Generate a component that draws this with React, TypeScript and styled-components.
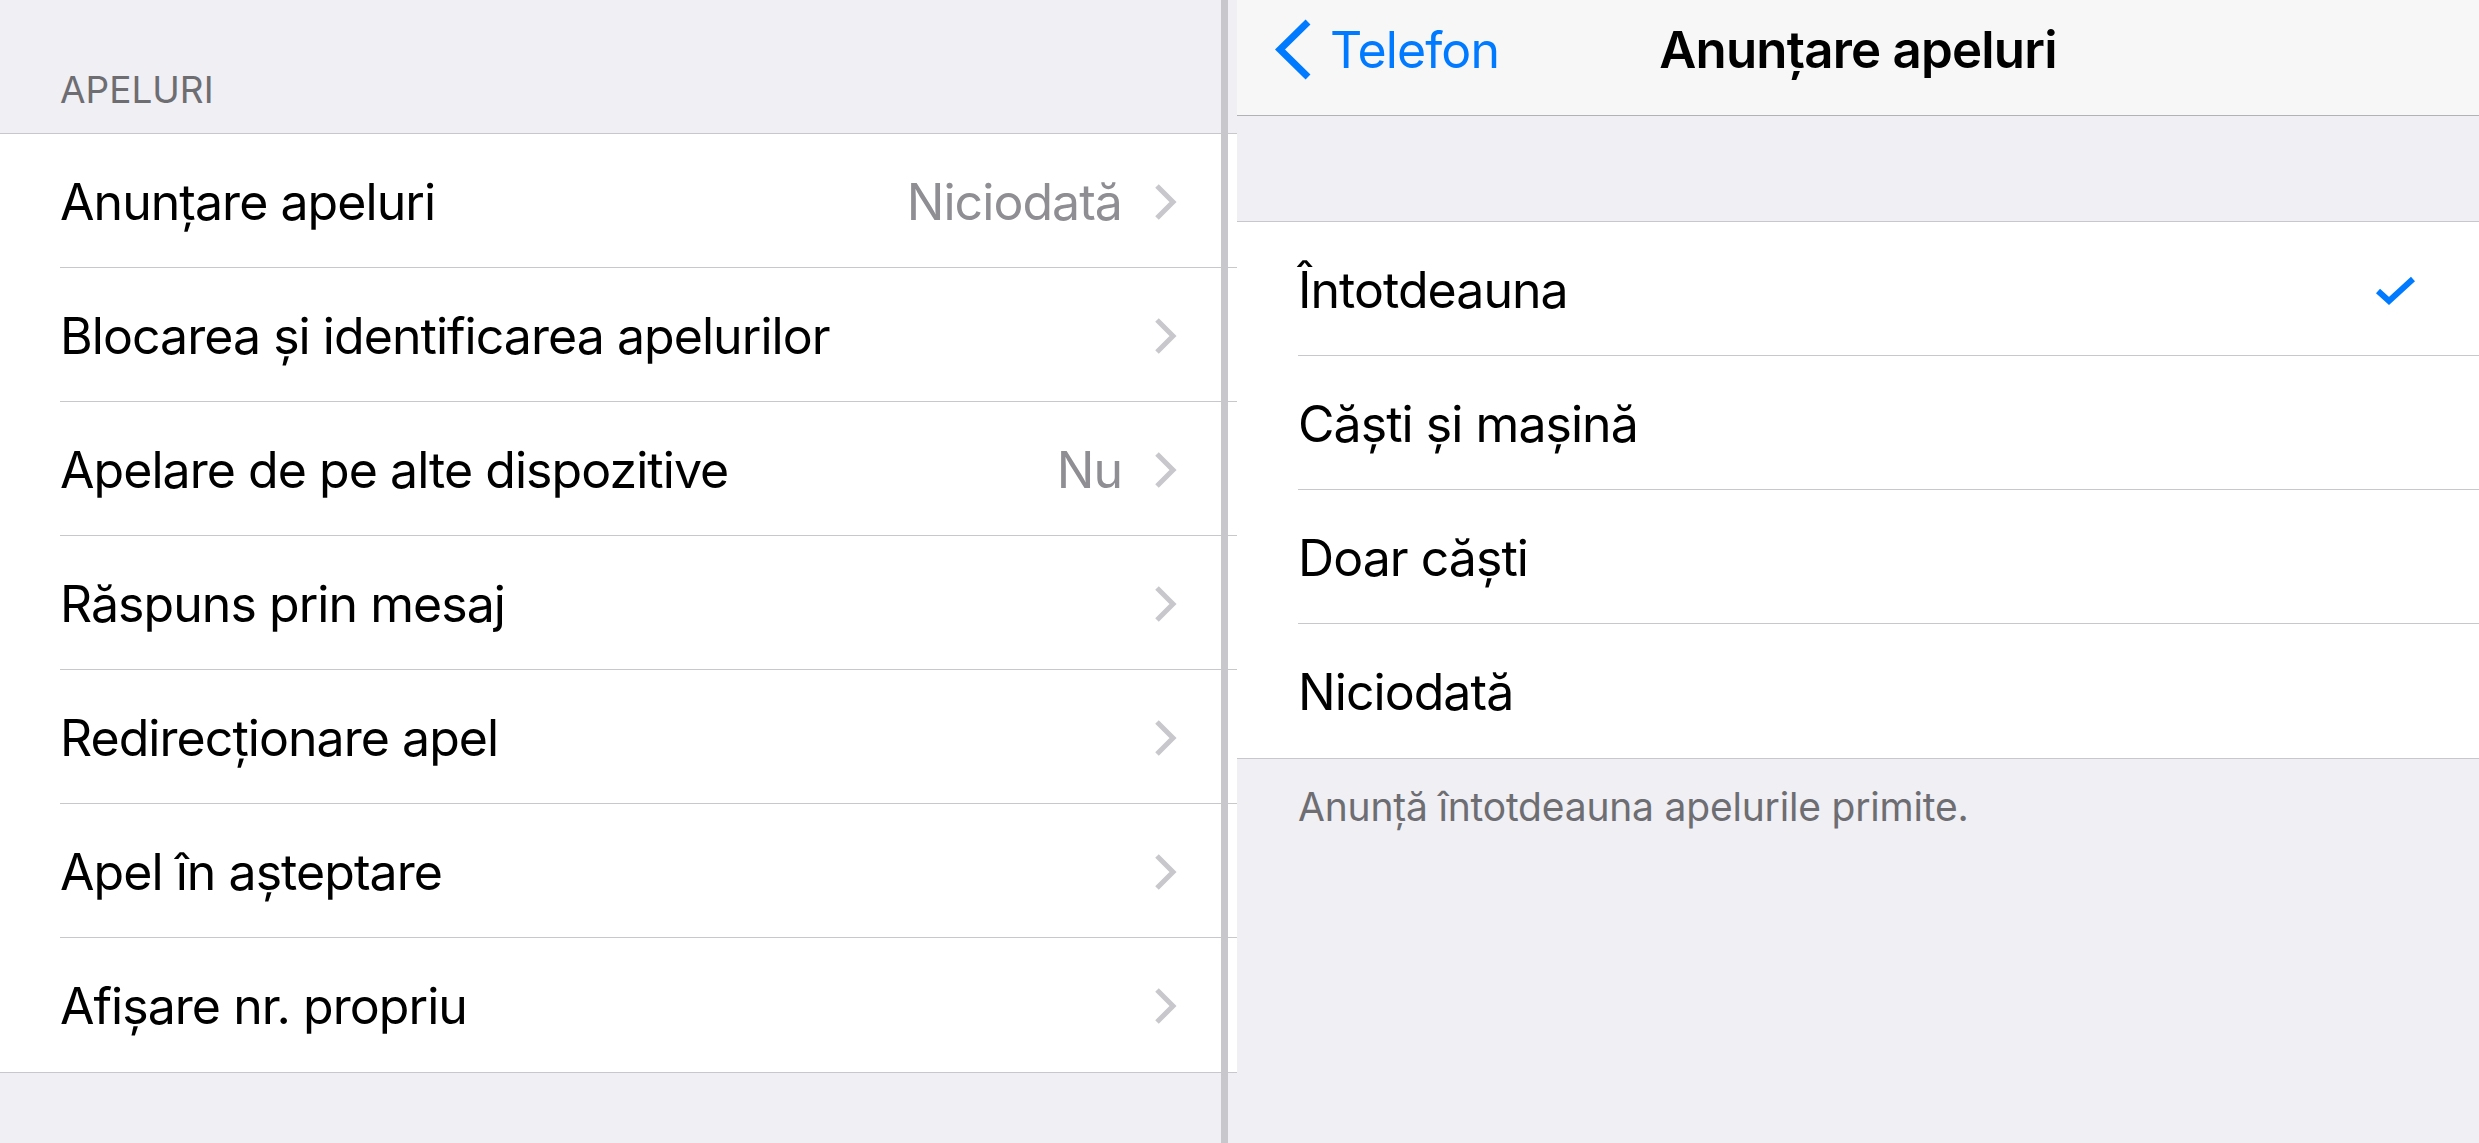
import React from 'react';
import styled, { createGlobalStyle } from 'styled-components';

const GlobalStyle = createGlobalStyle`
  html, body {
    margin: 0;
    padding: 0;
  }
  body {
    background: #efeff4;
    font-family: Inter, "Noto Sans", sans-serif;
    -webkit-font-smoothing: antialiased;
  }
`;

const Screen = styled.div`
  display: flex;
  width: 2479px;
  height: 1143px;
  overflow: hidden;
  background: #efeff4;
`;

const MasterPane = styled.div`
  position: relative;
  flex: 0 0 1237px;
  background: #efeff4;
`;

const SplitDivider = styled.div`
  position: absolute;
  top: 0;
  bottom: 0;
  right: 9px;
  width: 7px;
  background: #c8c7cc;
`;

const SectionHeader = styled.div`
  display: flex;
  align-items: flex-end;
  height: 133px;
  box-sizing: border-box;
  padding: 0 60px 21px;
  font-size: 37px;
  line-height: 44px;
  color: #6d6d72;
  text-transform: uppercase;
`;

const Group = styled.div`
  background: #fff;
  border-top: 1px solid #c8c7cc;
  border-bottom: 1px solid #c8c7cc;
`;

const Row = styled.div<{ $inset: number }>`
  display: flex;
  height: 134px;
  padding-left: ${(p) => p.$inset}px;
`;

const RowBody = styled.div<{ $padRight: number }>`
  flex: 1;
  display: flex;
  align-items: center;
  box-sizing: border-box;
  padding-top: 2px;
  padding-right: ${(p) => p.$padRight}px;
  border-bottom: 1px solid #c8c7cc;

  ${Row}:last-child & {
    border-bottom: none;
  }
`;

const Label = styled.span`
  flex: 1;
  font-size: 50px;
  letter-spacing: -0.95px;
  color: #000;
  white-space: nowrap;
`;

const Value = styled.span`
  font-size: 50px;
  letter-spacing: -0.95px;
  color: #8e8e93;
  margin-right: 32px;
`;

const DetailPane = styled.div`
  flex: 1;
  display: flex;
  flex-direction: column;
  background: #efeff4;
`;

const NavBar = styled.div`
  display: grid;
  grid-template-columns: 1fr auto 1fr;
  align-items: center;
  height: 116px;
  box-sizing: border-box;
  padding-bottom: 16px;
  background: #f7f7f8;
  border-bottom: 1px solid #b2b2b6;
`;

const BackButton = styled.div`
  display: flex;
  align-items: center;
  gap: 18px;
  padding-left: 37px;
  color: #007aff;
  font-size: 50px;
  letter-spacing: -0.9px;
`;

const NavTitle = styled.div`
  font-size: 51px;
  font-weight: 600;
  letter-spacing: -0.8px;
  color: #000;
`;

const GroupSpacer = styled.div`
  height: 105px;
`;

const Footer = styled.div`
  padding: 24px 61px 0;
  font-size: 39px;
  line-height: 48px;
  letter-spacing: -0.2px;
  color: #6d6d72;
`;

const Chevron = () => (
  <svg width="23" height="38" viewBox="0 0 23 38">
    <polyline
      points="3,3 19,19 3,35"
      fill="none"
      stroke="#c7c7cc"
      strokeWidth="5"
      strokeLinejoin="miter"
    />
  </svg>
);

const BackChevron = () => (
  <svg width="38" height="63" viewBox="0 0 38 63">
    <polyline
      points="34,4 6,31.5 34,59"
      fill="none"
      stroke="#007aff"
      strokeWidth="7"
      strokeLinejoin="miter"
    />
  </svg>
);

const Checkmark = () => (
  <svg width="40" height="32" viewBox="0 0 40 32">
    <polyline
      points="3,17 14,27 38,5"
      fill="none"
      stroke="#007aff"
      strokeWidth="6"
      strokeLinejoin="miter"
    />
  </svg>
);

const callSettings = [
  { label: 'Anunțare apeluri', value: 'Niciodată' },
  { label: 'Blocarea și identificarea apelurilor' },
  { label: 'Apelare de pe alte dispozitive', value: 'Nu' },
  { label: 'Răspuns prin mesaj' },
  { label: 'Redirecționare apel' },
  { label: 'Apel în așteptare' },
  { label: 'Afișare nr. propriu' },
];

const announceOptions = ['Întotdeauna', 'Căști și mașină', 'Doar căști', 'Niciodată'];

export default function App() {
  const selected = 'Întotdeauna';

  return (
    <>
      <GlobalStyle />
      <Screen>
        <MasterPane>
          <SectionHeader>Apeluri</SectionHeader>
          <Group>
            {callSettings.map((item) => (
              <Row key={item.label} $inset={60}>
                <RowBody $padRight={60}>
                  <Label>{item.label}</Label>
                  {item.value && <Value>{item.value}</Value>}
                  <Chevron />
                </RowBody>
              </Row>
            ))}
          </Group>
          <SplitDivider />
        </MasterPane>

        <DetailPane>
          <NavBar>
            <BackButton>
              <BackChevron />
              Telefon
            </BackButton>
            <NavTitle>Anunțare apeluri</NavTitle>
            <div />
          </NavBar>
          <GroupSpacer />
          <Group>
            {announceOptions.map((opt) => (
              <Row key={opt} $inset={61}>
                <RowBody $padRight={64}>
                  <Label>{opt}</Label>
                  {opt === selected && <Checkmark />}
                </RowBody>
              </Row>
            ))}
          </Group>
          <Footer>Anunță întotdeauna apelurile primite.</Footer>
        </DetailPane>
      </Screen>
    </>
  );
}
